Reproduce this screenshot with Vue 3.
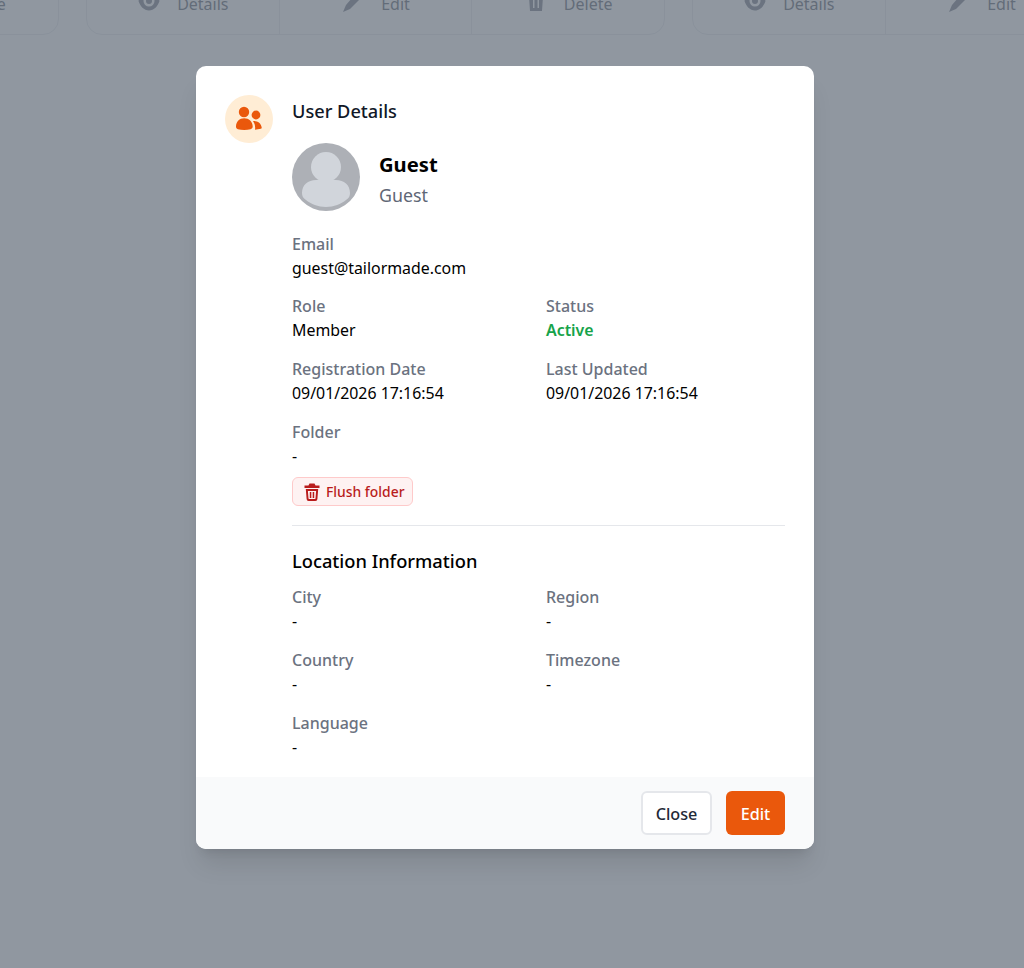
<script setup>
const cards = [
  { id: 0, actions: ['Delete'] },
  { id: 1, actions: ['Details', 'Edit', 'Delete'] },
  { id: 2, actions: ['Details', 'Edit', 'Delete'] },
]
const iconPaths = {
  Details: 'M12 2.500C7 2.500 3 7 1.500 12 3 17 7 21.500 12 21.500s9-4.500 10.500-9.500C21 7 17 2.500 12 2.500zm0 15a5.500 5.500 0 1 1 0-11 5.500 5.500 0 0 1 0 11zm0-8.500a3 3 0 1 0 0 6 3 3 0 0 0 0-6z',
  Edit: 'M17 2l5 5L9 20l-7 3 3-7L17 2z',
  Delete: 'M9 1h6l1 2h4v2.500H4V3h4l1-2zM5 7.500h14l-1 14.500H6L5 7.500zm4 3v8.500h1.500v-8.500H9zm4.500 0v8.500H15v-8.500h-1.500z',
}
</script>

<template>
  <div class="page">
    <div class="cards">
      <div v-for="card in cards" :key="card.id" class="card" :class="{ first: card.id === 0 }">
        <div v-for="a in card.actions" :key="a" class="action">
          <svg viewBox="0 0 24 24" width="24" height="24" class="act-icon"><path :d="iconPaths[a]" fill="currentColor" fill-rule="evenodd" /></svg>
          <span>{{ a }}</span>
        </div>
      </div>
    </div>

    <div class="overlay">
      <div class="modal">
        <div class="body">
          <div class="badge">
            <svg viewBox="0 0 48 48" width="48" height="48">
              <circle cx="19" cy="17" r="5.200" fill="#ea580c" />
              <circle cx="31" cy="20" r="4.400" fill="#ea580c" />
              <path d="M11 31.500c0-5 3.500-8.300 8.200-8.300s8.500 3.300 8.500 8.300c0 1.500-.8 2.300-2.200 2.700-1.900.6-4 .8-6.300.8s-4.500-.2-6.300-.8c-1.300-.4-1.900-1.300-1.900-2.700z" fill="#ea580c" />
              <path d="M29 26c4 0 7.300 2.800 7.700 6.500.1.700-.3 1.100-.9 1.300l-5.800 1c.5-3.300-.2-6.300-1.900-8.400 0-.2.400-.4.900-.4z" fill="#ea580c" />
            </svg>
          </div>
          <div class="content">
            <h3 class="title">User Details</h3>
            <div class="profile">
              <svg class="avatar" viewBox="0 0 68 68" width="68" height="68">
                <circle cx="34" cy="34" r="34" fill="#adb0b6" />
                <circle cx="34" cy="24" r="15" fill="#d1d5db" />
                <path d="M10 50C10 42 16 37 24 37H44C52 37 58 42 58 50C58 53 57 55 54 57C49 61 42 64 34 64C26 64 19 61 14 57C11 55 10 53 10 50Z" fill="#d1d5db" />
              </svg>
              <div class="names">
                <div class="name">Guest</div>
                <div class="sub">Guest</div>
              </div>
            </div>

            <div class="grid">
              <div class="field full email"><div class="label">Email</div><div class="value">guest@tailormade.com</div></div>
              <div class="field"><div class="label">Role</div><div class="value">Member</div></div>
              <div class="field"><div class="label">Status</div><div class="value active">Active</div></div>
              <div class="field"><div class="label">Registration Date</div><div class="value">09/01/2026 17:16:54</div></div>
              <div class="field"><div class="label">Last Updated</div><div class="value">09/01/2026 17:16:54</div></div>
              <div class="field full">
                <div class="label">Folder</div><div class="value">-</div>
                <button class="flush">
                  <svg viewBox="0 0 20 20" width="20" height="20"><path d="M7.500 1.500h5L13.500 3.500h4V6h-15V3.500h4L7.500 1.500zM3.800 7h12.400l-.8 10a2 2 0 0 1-2 1.900H6.600a2 2 0 0 1-2-1.900L3.800 7zm2.100 1.900l.6 7.600c0 .3.200.5.500.5h6c.3 0 .5-.2.500-.5l.6-7.600H5.900zm1.900 1h1.500v6H7.800v-6zm2.900 0h1.500v6h-1.500v-6z" fill="#b91c1c" fill-rule="evenodd" /></svg>
                  Flush folder
                </button>
              </div>
            </div>

            <hr class="rule" />

            <h4 class="section">Location Information</h4>
            <div class="grid">
              <div class="field"><div class="label">City</div><div class="value">-</div></div>
              <div class="field"><div class="label">Region</div><div class="value">-</div></div>
              <div class="field"><div class="label">Country</div><div class="value">-</div></div>
              <div class="field"><div class="label">Timezone</div><div class="value">-</div></div>
              <div class="field full"><div class="label">Language</div><div class="value">-</div></div>
            </div>
          </div>
        </div>
        <div class="footer">
          <button class="btn close">Close</button>
          <button class="btn edit">Edit</button>
        </div>
      </div>
    </div>
  </div>
</template>

<style>
html, body { margin: 0; background: #fff; }
</style>

<style scoped>
.page {
  position: relative;
  width: 1024px;
  height: 968px;
  overflow: hidden;
  background: #fff;
  font-family: "Noto Sans", "Open Sans", sans-serif;
  color: #000;
}
.cards {
  display: flex;
  gap: 27px;
  margin-top: -30px;
  margin-left: -520px;
}
.card {
  flex: none;
  width: 579px;
  height: 65px;
  box-sizing: border-box;
  border: 1px solid #e5e7eb;
  border-radius: 0 0 16px 16px;
  display: flex;
  color: #4b5563;
  font-size: 16px;
}
.card.first { justify-content: flex-end; }
.card.first .action { flex: none; width: 193px; }
.action {
  flex: 1;
  display: flex;
  align-items: center;
  justify-content: center;
  gap: 16px;
  padding-top: 3px;
  height: 63px;
  box-sizing: border-box;
  border-left: 1px solid #e5e7eb;
}
.action:first-child { border-left: 0; }
.act-icon { color: #6b7280; margin-bottom: 6px; }
.overlay {
  position: absolute;
  inset: 0;
  padding-right: 14px;
  background: rgba(107, 116, 128, 0.75);
}
.modal {
  width: 618px;
  height: 783px;
  margin: 66px auto 0;
  background: #fff;
  border-radius: 10px;
  overflow: hidden;
  box-shadow: 0 20px 25px -5px rgba(0,0,0,.1), 0 8px 10px -6px rgba(0,0,0,.1);
  display: flex;
  flex-direction: column;
}
.body {
  flex: 1;
  display: flex;
  gap: 19px;
  padding: 29px 29px 0;
}
.badge {
  flex: none;
  width: 48px;
  height: 48px;
  border-radius: 50%;
  background: #ffedd5;
}
.badge svg { display: block; }
.content { flex: 1; min-width: 0; }
.title {
  margin: 0;
  font-size: 18.200px;
  line-height: 24px;
  font-weight: 500;
  color: #111827;
  padding-top: 4px;
}
.profile {
  display: flex;
  align-items: center;
  gap: 19px;
  margin-top: 20px;
}
.avatar { display: block; }
.names { padding-top: 4px; }
.name { font-size: 20.200px; line-height: 28px; font-weight: 700; margin-top: -2px; }
.sub { font-size: 17.800px; line-height: 24px; color: #5f6776; margin-top: 5px; }
.grid {
  display: grid;
  grid-template-columns: 1fr 1fr;
  column-gap: 15px;
  row-gap: 15px;
}
.profile + .grid { margin-top: 20px; }
.email { margin-top: 1px; margin-bottom: -1px; }
.full { grid-column: 1 / -1; }
.label { font-size: 16px; line-height: 24px; font-weight: 500; color: #6b7280; }
.value { font-size: 15.900px; line-height: 24px; }
.active { color: #16a34a; font-weight: 600; }
.flush {
  display: flex;
  align-items: center;
  gap: 4px;
  margin-top: 9px;
  height: 29px;
  padding: 0 7px 0 9px;
  background: #fef2f2;
  border: 1px solid #fecaca;
  border-radius: 6px;
  color: #b91c1c;
  font: 500 13.900px "Noto Sans", sans-serif;
}
.rule {
  border: 0;
  border-top: 1px solid #e5e7eb;
  margin: 19px 0 22px;
}
.section {
  margin: 0 0 11px;
  font-size: 18.300px;
  line-height: 26px;
  font-weight: 500;
}
.footer {
  height: 72px;
  box-sizing: border-box;
  background: #f9fafb;
  display: flex;
  justify-content: flex-end;
  align-items: center;
  gap: 14px;
  padding: 0 29px;
}
.btn {
  height: 44px;
  border-radius: 6px;
  padding: 1px 0 0;
  font: 500 16.200px "Noto Sans", sans-serif;
}
.close {
  width: 71px;
  background: #fff;
  border: 2px solid #e5e7eb;
  color: #1f2937;
}
.edit {
  width: 59px;
  background: #ea580c;
  border: 0;
  color: #fff;
}
</style>
